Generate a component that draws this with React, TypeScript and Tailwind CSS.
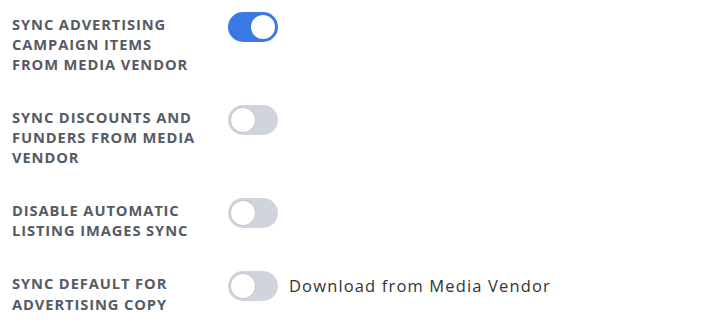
import { useState } from "react";

type Row = {
  id: string;
  lines: string[];
  on: boolean;
  note?: string;
};

const ROWS: Row[] = [
  {
    id: "campaign",
    lines: ["SYNC ADVERTISING", "CAMPAIGN ITEMS", "FROM MEDIA VENDOR"],
    on: true,
  },
  {
    id: "discounts",
    lines: ["SYNC DISCOUNTS AND", "FUNDERS FROM MEDIA", "VENDOR"],
    on: false,
  },
  {
    id: "images",
    lines: ["DISABLE AUTOMATIC", "LISTING IMAGES SYNC"],
    on: false,
  },
  {
    id: "copy",
    lines: ["SYNC DEFAULT FOR", "ADVERTISING COPY"],
    on: false,
    note: "Download from Media Vendor",
  },
];

function Toggle({ on, onClick }: { on: boolean; onClick: () => void }) {
  return (
    <button
      type="button"
      onClick={onClick}
      className={`relative h-[30px] w-[50px] shrink-0 rounded-full transition-colors ${
        on ? "bg-[#3a78e6]" : "bg-[#d0d4dc]"
      }`}
    >
      <span
        className={`absolute top-[3px] h-[24px] w-[24px] rounded-full bg-white transition-all ${
          on ? "left-[23px]" : "left-[3px] shadow-[0_0_0_1px_#c3c7cf]"
        }`}
      />
    </button>
  );
}

export default function App() {
  const [state, setState] = useState<Record<string, boolean>>(
    Object.fromEntries(ROWS.map((r) => [r.id, r.on]))
  );

  return (
    <div
      className="flex flex-col gap-[30.7px] bg-white pl-[12px] pt-[11.7px]"
      style={{ fontFamily: '"Open Sans", "Noto Sans", sans-serif' }}
    >
      {ROWS.map((row) => (
        <div key={row.id} className="flex items-start">
          <div className="mt-[2px] w-[216px] shrink-0 text-[14.7px] font-bold leading-[20.2px] tracking-[0.9px] text-[#565a64]">
            {row.lines.map((l) => (
              <div key={l}>{l}</div>
            ))}
          </div>
          <div className="flex items-center gap-[11px]">
            <Toggle
              on={state[row.id]}
              onClick={() => setState((s) => ({ ...s, [row.id]: !s[row.id] }))}
            />
            {row.note && (
              <span className="text-[16.5px] tracking-[1.15px] text-[#333]">{row.note}</span>
            )}
          </div>
        </div>
      ))}
    </div>
  );
}
